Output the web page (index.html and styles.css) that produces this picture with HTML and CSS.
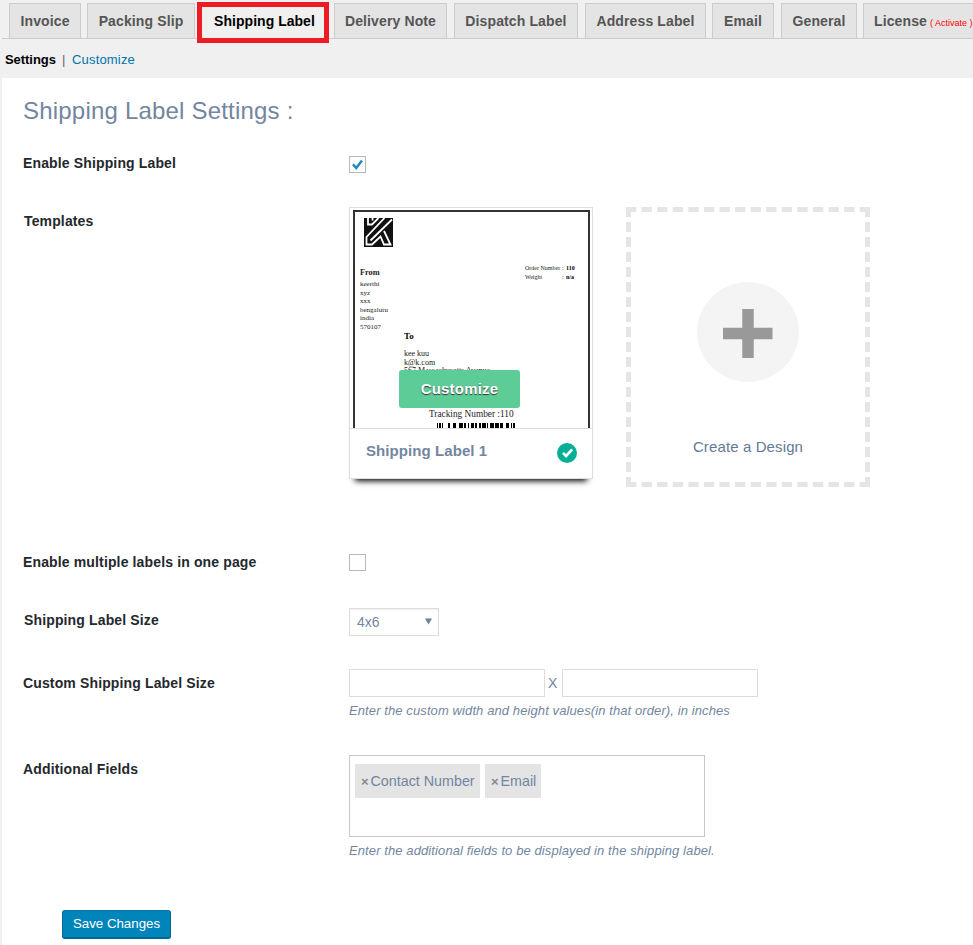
FILE: index.html
```html
<!DOCTYPE html>
<html lang="en">
<head>
<meta charset="utf-8">
<title>Shipping Label Settings</title>
<link rel="stylesheet" href="styles.css">
</head>
<body>
<nav class="tabs">
  <a class="tab t-invoice">Invoice</a>
  <a class="tab t-packing">Packing Slip</a>
  <a class="tab active">Shipping Label</a>
  <a class="tab t-delivery">Delivery Note</a>
  <a class="tab t-dispatch">Dispatch Label</a>
  <a class="tab t-address">Address Label</a>
  <a class="tab t-email">Email</a>
  <a class="tab t-general">General</a>
  <a class="tab t-license">License <small>( Activate )</small></a>
</nav>
<div class="subnav"><b>Settings</b><span class="sep">|</span><a>Customize</a></div>
<main class="panel">
  <h1>Shipping Label Settings :</h1>
  <div class="row r-enable">
    <label>Enable Shipping Label</label>
    <span class="check"><svg viewBox="0 0 16 16" width="16" height="16"><path d="M4 8.300 7.200 12 13 4.500" fill="none" stroke="#1e8cbe" stroke-width="2.500"/></svg></span>
  </div>
  <div class="row r-templates">
    <label class="in">Templates</label>
    <div class="cards">
      <section class="card">
        <div class="preview">
          <div class="sheet">
            <svg class="logo" viewBox="0 0 29 29" width="29" height="29">
              <rect width="29" height="29" fill="#111"/>
              <g fill="none" stroke="#fff" stroke-width="1.800">
                <path d="M4 0V6.500H8L14.500 0"/>
                <path d="M8.500 0V2.500"/>
                <path d="M20.500 0 2.500 19V26.500H8L16.500 18.500 20 26.500H26.500L20 13"/>
                <path d="M28 1.500 6.500 22.500"/>
              </g>
            </svg>
            <div class="head">
              <div class="from"><b>From</b>keerthi<br>xyz<br>xxx<br>bengaluru<br>india<br>570107</div>
              <div class="meta"><span>Order Number</span><span>:</span><b>110</b><span>Weight</span><span>:</span><b>n/a</b></div>
            </div>
            <div class="to"><b>To</b>kee kuu<br>k@k.com<br>567 Massachusetts Avenue</div>
            <div class="tracking">Tracking Number :110</div>
            <svg class="bars" viewBox="0 0 80 5" width="80" height="5" shape-rendering="crispEdges"><path d="M1 0h1v5h-1zM3 0h2v5h-2zM6 0h1v5h-1zM12 0h2v5h-2zM17 0h3v5h-3zM23 0h4v5h-4zM28 0h2v5h-2zM32 0h1v5h-1zM35 0h3v5h-3zM39 0h2v5h-2zM43 0h2v5h-2zM46 0h4v5h-4zM51 0h1v5h-1zM54 0h4v5h-4zM59 0h4v5h-4zM64 0h3v5h-3zM70 0h3v5h-3zM75 0h1v5h-1zM77 0h2v5h-2z"/></svg>
          </div>
          <a class="customize">Customize</a>
        </div>
        <div class="caption"><b>Shipping Label 1</b>
          <svg viewBox="0 0 20 20" width="20" height="20"><circle cx="10" cy="10" r="10" fill="#03b097"/><path d="M6 9.800 9.100 13 15.200 6.400" fill="none" stroke="#fff" stroke-width="2.600"/></svg>
        </div>
      </section>
      <section class="create">
        <svg class="dashes" viewBox="0 0 244 280" width="244" height="280" fill="none" stroke="#e5e5e5" stroke-width="5">
          <path d="M0 2.500H244M0 277.500H244" stroke-dasharray="10.300 5.280"/>
          <path d="M2.500 0V280M241.500 0V280" stroke-dasharray="10 5"/>
        </svg>
        <svg class="plus" viewBox="0 0 102 100" width="102" height="100"><ellipse cx="51" cy="50" rx="51" ry="50" fill="#f4f4f4"/><path d="M26 51.500H75.500M51 27V76" stroke="#999" stroke-width="11.500"/></svg>
        <span>Create a Design</span>
      </section>
    </div>
  </div>
  <div class="row r-multi">
    <label>Enable multiple labels in one page</label>
    <span class="check"></span>
  </div>
  <div class="row r-size">
    <label class="in">Shipping Label Size</label>
    <div class="select"><span>4x6</span><svg viewBox="0 0 7 7" width="7" height="7"><path d="M0 .5H7L3.500 6.500z" fill="#6c819d"/></svg></div>
  </div>
  <div class="row r-custom">
    <label>Custom Shipping Label Size</label>
    <div>
      <div class="dims"><input type="text"><span>X</span><input type="text"></div>
      <p class="help">Enter the custom width and height values(in that order), in inches</p>
    </div>
  </div>
  <div class="row r-fields">
    <label>Additional Fields</label>
    <div>
      <div class="tags"><span class="tag tag-a"><i>×</i>Contact Number</span><span class="tag tag-b"><i>×</i>Email</span></div>
      <p class="help">Enter the additional fields to be displayed in the shipping label.</p>
    </div>
  </div>
  <button class="save">Save Changes</button>
</main>
</body>
</html>
```
FILE: styles.css
```css
* { box-sizing: border-box; }
body {
  margin: 0;
  height: 945px;
  overflow: hidden;
  background: #f0f0f0;
  color: #72869f;
  font-family: "Liberation Sans", Arial, sans-serif;
  font-size: 14px;
}
.tabs {
  display: flex;
  align-items: flex-start;
  height: 39px;
  margin-left: 2px;
  padding: 3px 0 0 7px;
  border-bottom: 1px solid #ccc;
  white-space: nowrap;
}
.tab {
  flex: none;
  height: 35px;
  border: 1px solid #ccc;
  border-bottom: 0;
  background: #e4e4e4;
  color: #555;
  font-size: 14px;
  font-weight: 700;
  line-height: 34px;
  text-align: center;
  letter-spacing: .12px;
}
.t-invoice { width: 72px; margin-right: 6px; }
.t-packing { width: 108px; margin-right: 2px; }
.tab.active {
  position: relative;
  width: 132px;
  height: 41px;
  margin: -1px 5px 0 0;
  padding-left: 3px;
  border: 5px solid #ed1c24;
  background: #f0f0f0;
  color: #000;
  line-height: 28px;
  letter-spacing: .03px;
}
.t-delivery { width: 113px; margin-right: 7px; }
.t-dispatch { width: 124px; margin-right: 7px; }
.t-address { width: 121px; margin-right: 6px; }
.t-email { width: 62px; margin-right: 7px; }
.t-general { width: 76px; margin-right: 6px; }
.t-license { width: 130px; padding-left: 10px; text-align: left; }
.tab small { margin-left: -1px; color: #f00; font-size: 9px; font-weight: 400; letter-spacing: 0; }
.subnav { display: flex; height: 39px; padding: 13px 0 0 5px; font-size: 13px; line-height: 16px; }
.subnav b { width: 51px; color: #000; font-size: 13px; letter-spacing: -.05px; }
.sep { width: 16px; padding-left: 6px; color: #666; }
.subnav a { color: #0073aa; letter-spacing: .18px; }
.panel { height: 867px; margin-left: 2px; padding: 18px 0 0 21px; background: #fff; }
h1 { height: 57px; margin: 0; font-size: 24px; font-weight: 400; line-height: 30px; letter-spacing: .2px; }
.row { display: grid; grid-template-columns: 326px 1fr; align-items: start; }
.row label { color: #23282d; font-size: 14px; font-weight: 700; line-height: 20px; letter-spacing: .14px; }
.row label.in { padding-left: 1px; }
.check { display: block; width: 17px; height: 17px; margin-top: 2px; border: 1px solid #b4b9be; background: #fff; }
.check svg { display: block; margin: -1px; }
.r-enable { height: 54px; }
.r-enable .check { margin-top: 3px; }
.r-templates { height: 345px; }
.r-templates label { padding-top: 4px; }
.cards { display: flex; gap: 33px; }
.card { width: 244px; height: 272px; border: 1px solid #dedede; box-shadow: 0 8px 6px -6px #000; background: #fff; }
.preview { position: relative; height: 221px; padding: 2px 2px 0 3px; border-bottom: 1px solid #dedede; }
.sheet { height: 218px; overflow: hidden; border: 2px solid #333; border-bottom: 0; padding: 6px 0 0 5px; color: #222; font-family: "Liberation Serif", "Times New Roman", serif; }
.logo { display: block; margin-left: 4px; }
.head { display: flex; justify-content: space-between; height: 84px; padding-top: 22px; }
.from { font-size: 7px; line-height: 8.500px; }
.from b { display: block; height: 11px; font-size: 8.300px; }
.meta { display: grid; grid-template-columns: 37px 4px 22px; height: 17px; margin-top: -5px; font-size: 6px; line-height: 8px; }
.meta b { color: #000; }
.to { height: 77px; margin-left: 44px; font-size: 8px; line-height: 8.500px; }
.to b { display: block; height: 19px; color: #000; font-size: 9px; line-height: 10px; }
.tracking { height: 15px; margin-left: 69px; font-size: 9.300px; line-height: 12px; white-space: nowrap; }
.bars { display: block; margin-left: 76px; }
.customize { position: absolute; left: 49px; top: 162px; width: 121px; height: 38px; border-radius: 3px; background: #5dcc96; color: #fff; font-size: 15px; font-weight: 700; line-height: 38px; text-align: center; text-shadow: 0 1px 1px #333; letter-spacing: .2px; }
.caption { display: flex; justify-content: space-between; padding: 13px 15px 0 16px; font-size: 15px; line-height: 18px; letter-spacing: .08px; }
.caption svg { margin-top: 1px; }
.create { position: relative; display: flex; flex-direction: column; align-items: center; width: 244px; height: 280px; padding-top: 75px; color: #627a96; font-size: 15px; letter-spacing: .12px; }
.dashes { position: absolute; inset: 0; }
.create span { margin-top: 56px; line-height: 18px; }
.r-multi { height: 56px; }
.r-size { height: 61px; }
.r-size label { padding-top: 2px; }
.select { display: flex; align-items: center; justify-content: space-between; width: 90px; height: 28px; padding: 0 6px 0 7px; border: 1px solid #ddd; font-size: 14px; box-shadow: inset 0 1px 2px rgba(0,0,0,.07); }
.select svg { margin-top: -1px; }
.r-custom { height: 86px; }
.r-custom label { padding-top: 4px; }
.dims { display: flex; align-items: center; }
.dims input { width: 196px; height: 28px; margin: 0; border: 1px solid #ddd; background: #fff; }
.dims span { width: 17px; padding-left: 3px; font-size: 14px; }
.help { margin: 5px 0 0; font-size: 13px; font-style: italic; line-height: 18px; letter-spacing: .1px; white-space: nowrap; }
.r-fields { height: 155px; }
.r-fields label { padding-top: 4px; }
.tags { display: flex; align-items: flex-start; gap: 5px; width: 356px; height: 82px; padding: 8px 5px; border: 1px solid #c8c8c8; }
.tag { height: 34px; padding-left: 6px; background: #e4e4e4; font-size: 14.300px; line-height: 34px; white-space: nowrap; }
.tag i { display: inline-block; width: 9.500px; color: #888; font-size: 13px; font-style: normal; font-weight: 700; }
.tag-a { width: 125px; }
.tag-b { width: 56px; }
.save { display: block; width: 109px; height: 29px; margin-left: 39px; padding: 0 0 2px; border: 1px solid #006799; border-top-color: #0073aa; border-radius: 3px; background: #0085ba; color: #fff; font: 13.300px/25px "Liberation Sans", Arial, sans-serif; box-shadow: inset 0 -1px 0 #006799; }
```
